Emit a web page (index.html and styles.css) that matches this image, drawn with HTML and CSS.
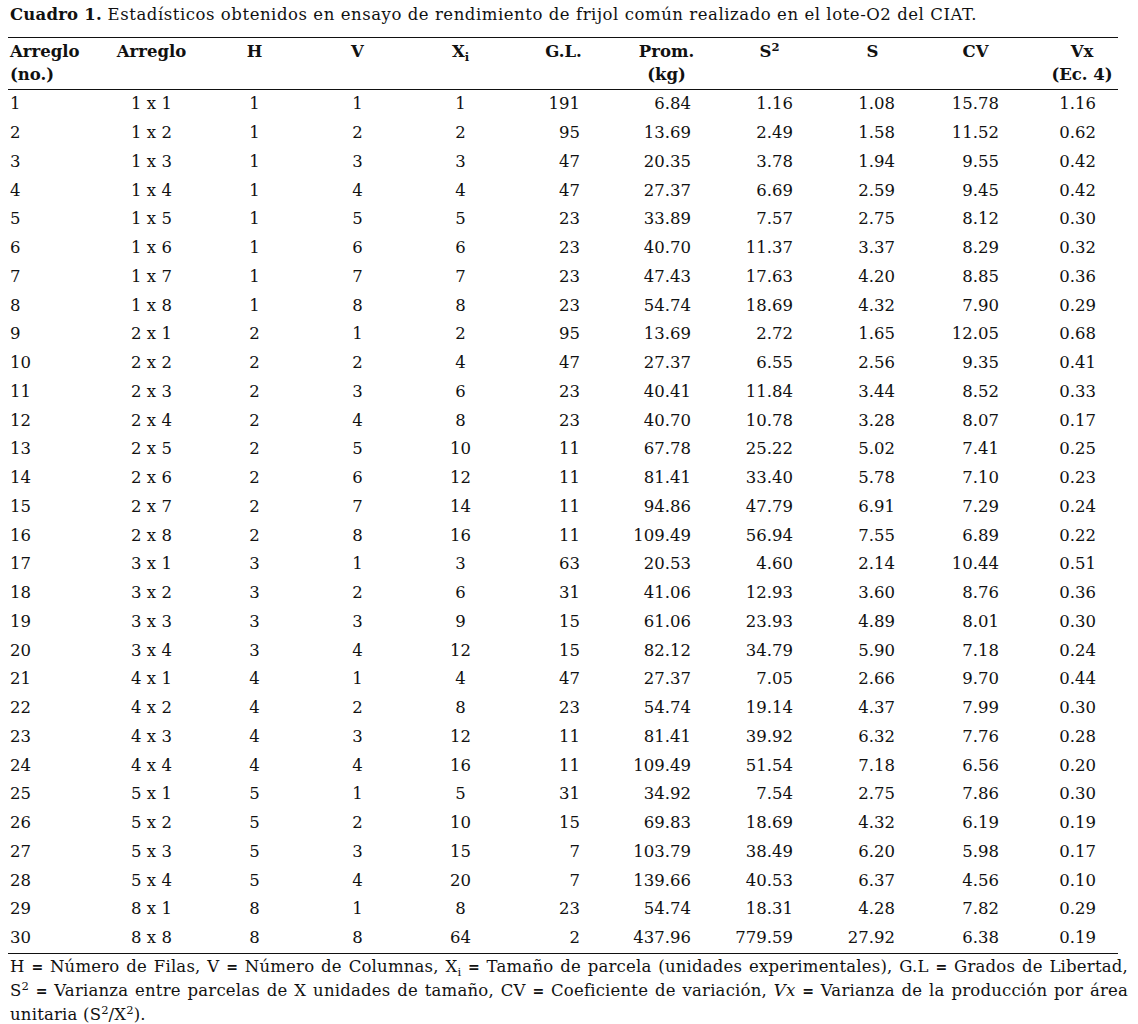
FILE: index.html
```html
<!DOCTYPE html>
<html lang="es">
<head>
<meta charset="utf-8">
<title>Cuadro 1</title>
<link rel="stylesheet" href="styles.css">
</head>
<body>
<div class="page">
<p class="title"><b>Cuadro 1.</b> Estadísticos obtenidos en ensayo de rendimiento de frijol común realizado en el lote-O2 del CIAT.</p>
<table class="stats">
<colgroup>
<col class="c-no"><col class="c-std"><col class="c-std"><col class="c-std"><col class="c-std"><col class="c-std"><col class="c-std"><col class="c-std"><col class="c-std"><col class="c-std"><col class="c-vx">
</colgroup>
<thead>
<tr>
<th class="h-left">Arreglo<br>(no.)</th>
<th>Arreglo</th>
<th>H</th>
<th>V</th>
<th>X<sub>i</sub></th>
<th>G.L.</th>
<th>Prom.<br>(kg)</th>
<th>S<sup>2</sup></th>
<th>S</th>
<th>CV</th>
<th class="h-vx">Vx<br>(Ec. 4)</th>
</tr>
</thead>
<tbody>
<tr><td>1</td><td>1 x 1</td><td>1</td><td>1</td><td>1</td><td>191</td><td>6.84</td><td>1.16</td><td>1.08</td><td>15.78</td><td>1.16</td></tr>
<tr><td>2</td><td>1 x 2</td><td>1</td><td>2</td><td>2</td><td>95</td><td>13.69</td><td>2.49</td><td>1.58</td><td>11.52</td><td>0.62</td></tr>
<tr><td>3</td><td>1 x 3</td><td>1</td><td>3</td><td>3</td><td>47</td><td>20.35</td><td>3.78</td><td>1.94</td><td>9.55</td><td>0.42</td></tr>
<tr><td>4</td><td>1 x 4</td><td>1</td><td>4</td><td>4</td><td>47</td><td>27.37</td><td>6.69</td><td>2.59</td><td>9.45</td><td>0.42</td></tr>
<tr><td>5</td><td>1 x 5</td><td>1</td><td>5</td><td>5</td><td>23</td><td>33.89</td><td>7.57</td><td>2.75</td><td>8.12</td><td>0.30</td></tr>
<tr><td>6</td><td>1 x 6</td><td>1</td><td>6</td><td>6</td><td>23</td><td>40.70</td><td>11.37</td><td>3.37</td><td>8.29</td><td>0.32</td></tr>
<tr><td>7</td><td>1 x 7</td><td>1</td><td>7</td><td>7</td><td>23</td><td>47.43</td><td>17.63</td><td>4.20</td><td>8.85</td><td>0.36</td></tr>
<tr><td>8</td><td>1 x 8</td><td>1</td><td>8</td><td>8</td><td>23</td><td>54.74</td><td>18.69</td><td>4.32</td><td>7.90</td><td>0.29</td></tr>
<tr><td>9</td><td>2 x 1</td><td>2</td><td>1</td><td>2</td><td>95</td><td>13.69</td><td>2.72</td><td>1.65</td><td>12.05</td><td>0.68</td></tr>
<tr><td>10</td><td>2 x 2</td><td>2</td><td>2</td><td>4</td><td>47</td><td>27.37</td><td>6.55</td><td>2.56</td><td>9.35</td><td>0.41</td></tr>
<tr><td>11</td><td>2 x 3</td><td>2</td><td>3</td><td>6</td><td>23</td><td>40.41</td><td>11.84</td><td>3.44</td><td>8.52</td><td>0.33</td></tr>
<tr><td>12</td><td>2 x 4</td><td>2</td><td>4</td><td>8</td><td>23</td><td>40.70</td><td>10.78</td><td>3.28</td><td>8.07</td><td>0.17</td></tr>
<tr><td>13</td><td>2 x 5</td><td>2</td><td>5</td><td>10</td><td>11</td><td>67.78</td><td>25.22</td><td>5.02</td><td>7.41</td><td>0.25</td></tr>
<tr><td>14</td><td>2 x 6</td><td>2</td><td>6</td><td>12</td><td>11</td><td>81.41</td><td>33.40</td><td>5.78</td><td>7.10</td><td>0.23</td></tr>
<tr><td>15</td><td>2 x 7</td><td>2</td><td>7</td><td>14</td><td>11</td><td>94.86</td><td>47.79</td><td>6.91</td><td>7.29</td><td>0.24</td></tr>
<tr><td>16</td><td>2 x 8</td><td>2</td><td>8</td><td>16</td><td>11</td><td>109.49</td><td>56.94</td><td>7.55</td><td>6.89</td><td>0.22</td></tr>
<tr><td>17</td><td>3 x 1</td><td>3</td><td>1</td><td>3</td><td>63</td><td>20.53</td><td>4.60</td><td>2.14</td><td>10.44</td><td>0.51</td></tr>
<tr><td>18</td><td>3 x 2</td><td>3</td><td>2</td><td>6</td><td>31</td><td>41.06</td><td>12.93</td><td>3.60</td><td>8.76</td><td>0.36</td></tr>
<tr><td>19</td><td>3 x 3</td><td>3</td><td>3</td><td>9</td><td>15</td><td>61.06</td><td>23.93</td><td>4.89</td><td>8.01</td><td>0.30</td></tr>
<tr><td>20</td><td>3 x 4</td><td>3</td><td>4</td><td>12</td><td>15</td><td>82.12</td><td>34.79</td><td>5.90</td><td>7.18</td><td>0.24</td></tr>
<tr><td>21</td><td>4 x 1</td><td>4</td><td>1</td><td>4</td><td>47</td><td>27.37</td><td>7.05</td><td>2.66</td><td>9.70</td><td>0.44</td></tr>
<tr><td>22</td><td>4 x 2</td><td>4</td><td>2</td><td>8</td><td>23</td><td>54.74</td><td>19.14</td><td>4.37</td><td>7.99</td><td>0.30</td></tr>
<tr><td>23</td><td>4 x 3</td><td>4</td><td>3</td><td>12</td><td>11</td><td>81.41</td><td>39.92</td><td>6.32</td><td>7.76</td><td>0.28</td></tr>
<tr><td>24</td><td>4 x 4</td><td>4</td><td>4</td><td>16</td><td>11</td><td>109.49</td><td>51.54</td><td>7.18</td><td>6.56</td><td>0.20</td></tr>
<tr><td>25</td><td>5 x 1</td><td>5</td><td>1</td><td>5</td><td>31</td><td>34.92</td><td>7.54</td><td>2.75</td><td>7.86</td><td>0.30</td></tr>
<tr><td>26</td><td>5 x 2</td><td>5</td><td>2</td><td>10</td><td>15</td><td>69.83</td><td>18.69</td><td>4.32</td><td>6.19</td><td>0.19</td></tr>
<tr><td>27</td><td>5 x 3</td><td>5</td><td>3</td><td>15</td><td>7</td><td>103.79</td><td>38.49</td><td>6.20</td><td>5.98</td><td>0.17</td></tr>
<tr><td>28</td><td>5 x 4</td><td>5</td><td>4</td><td>20</td><td>7</td><td>139.66</td><td>40.53</td><td>6.37</td><td>4.56</td><td>0.10</td></tr>
<tr><td>29</td><td>8 x 1</td><td>8</td><td>1</td><td>8</td><td>23</td><td>54.74</td><td>18.31</td><td>4.28</td><td>7.82</td><td>0.29</td></tr>
<tr><td>30</td><td>8 x 8</td><td>8</td><td>8</td><td>64</td><td>2</td><td>437.96</td><td>779.59</td><td>27.92</td><td>6.38</td><td>0.19</td></tr>
</tbody>
</table>
<p class="note">H&nbsp;<b class="eq">=</b> Número de Filas, V&nbsp;<b class="eq">=</b> Número de Columnas, X<sub>i</sub>&nbsp;<b class="eq">=</b> Tamaño de parcela (unidades experimentales), G.L&nbsp;<b class="eq">=</b> Grados de Libertad, S<sup>2</sup>&nbsp;<b class="eq">=</b> Varianza entre parcelas de X unidades de tamaño, CV&nbsp;<b class="eq">=</b> Coeficiente de variación, <i>Vx</i>&nbsp;<b class="eq">=</b> Varianza de la producción por área unitaria (S<sup>2</sup>/X<sup>2</sup>).</p>
</div>
</body>
</html>
```

FILE: styles.css
```css
html, body {
  margin: 0;
  padding: 0;
  background: #ffffff;
}

body {
  color: #111111;
  font-family: "DejaVu Serif", "Liberation Serif", serif;
  font-size: 16.5px;
}

.page {
  padding-left: 8px;
}

.title {
  margin: 0;
  padding: 3px 0 0 2px;
  height: 34px;
  line-height: 23px;
  letter-spacing: 0.55px;
}

.title b {
  letter-spacing: 0.2px;
}

.stats {
  width: 1110px;
  table-layout: fixed;
  border-collapse: collapse;
}

.c-no { width: 92px; }
.c-std { width: 103px; }
.c-vx { width: 91px; }

.stats thead tr {
  border-top: 1.5px solid #111;
  border-bottom: 1.5px solid #111;
}

.stats th {
  font-weight: bold;
  text-align: center;
  vertical-align: top;
  line-height: 23px;
  padding: 2px 0 3px;
}

.stats th.h-left {
  text-align: left;
  padding-left: 2px;
}

.stats th.h-vx {
  padding-left: 19px;
}

.stats tbody tr:last-child {
  border-bottom: 1.5px solid #111;
}

.stats td {
  height: 28.75px;
  padding: 0;
  line-height: 20px;
  text-align: center;
  vertical-align: middle;
}

.stats td:nth-child(1) {
  text-align: left;
  padding-left: 2px;
}

.stats td:nth-child(6) { text-align: right; padding-right: 35px; }
.stats td:nth-child(7) { text-align: right; padding-right: 27px; }
.stats td:nth-child(8) { text-align: right; padding-right: 28px; }
.stats td:nth-child(9) { text-align: right; padding-right: 29px; }
.stats td:nth-child(10) { text-align: right; padding-right: 28px; }
.stats td:nth-child(11) { text-align: right; padding-right: 22px; }

sub, sup {
  font-size: 0.7em;
  line-height: 0;
}

.note {
  margin: 0;
  padding: 1px 0 0 2px;
  width: 1118px;
  line-height: 23px;
  text-align: justify;
  letter-spacing: 0.2px;
}

.note sub, .note sup {
  letter-spacing: 0;
}

.eq {
  font-family: "DejaVu Sans", sans-serif;
  font-weight: bold;
  font-size: 0.85em;
  letter-spacing: 0;
}
```
